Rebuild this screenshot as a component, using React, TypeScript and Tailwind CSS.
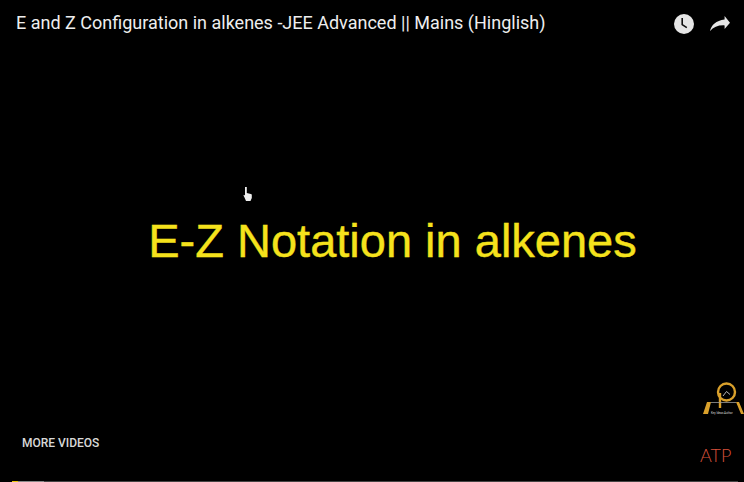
function ShareIcon() {
  return (
    <svg viewBox="0 0 20 15" className="w-5 h-[15px]" fill="#e6e6e6">
      <path d="M14.6 0 20 6.8 14.6 13V9.4C8.8 9 3.4 11 0 15 1.2 9 6 4.4 14.6 3.4Z" />
    </svg>
  );
}

function WatchLaterIcon() {
  return (
    <svg viewBox="0 0 20 20" className="w-5 h-5">
      <circle cx="10" cy="10" r="10" fill="#e6e6e6" />
      <path d="M8.2 4v6.6l4.6 3" fill="none" stroke="#111" strokeWidth="1.6" />
    </svg>
  );
}

function ChannelLogo() {
  return (
    <svg viewBox="0 0 46 46" className="w-[46px] h-[46px]">
      <circle cx="28.5" cy="17" r="8.5" fill="none" stroke="#d9a02b" strokeWidth="2.4" />
      <path d="M22 18v15" stroke="#d9a02b" strokeWidth="2.4" />
      <path d="M25 21l3.5-4.500 3.500 3" fill="none" stroke="#c8c8c8" strokeWidth="0.9" />
      <path d="M9 27h4l-3 12H5zM38 27h3l5 12h-3z" fill="#d9a02b" />
      <path d="M13 27.500h25" stroke="#999" strokeWidth="0.8" />
      <text x="13" y="39" fontSize="2.900" fill="#ddd" fontFamily="Roboto, sans-serif">Key Ideas Author</text>
    </svg>
  );
}

export default function App() {
  return (
    <div className="relative w-[744px] h-[482px] overflow-hidden bg-black font-['Roboto',sans-serif]">
      <div className="flex items-start justify-between pl-4 pr-[14px] pt-[5px]">
        <h1 className="text-[#eeeeee] text-[18px] leading-9 whitespace-nowrap font-normal">
          E and Z Configuration in alkenes -JEE Advanced || Mains (Hinglish)
        </h1>
        <div className="flex items-center gap-4 pt-[9px]">
          <WatchLaterIcon />
          <div className="-mt-[2px]">
            <ShareIcon />
          </div>
        </div>
      </div>

      <div className="flex justify-center pt-[172px] pl-[41px]">
        <p className="text-[#f5e21c] text-[47px] leading-[56px] whitespace-nowrap font-['Liberation_Sans',sans-serif] [-webkit-text-stroke:0.4px_#f5e21c]">
          E-Z Notation in alkenes
        </p>
      </div>

      {/* cursor caught in the capture */}
      <div className="absolute left-[243px] top-[186px]">
        <svg viewBox="0 0 10 15" className="w-[10px] h-[15px]" fill="#eee">
          <path d="M2 1h1.800v6l1 .2 1 .3 1 .2 1 .3 1 .5V12L7.500 15H3L1.500 11.500 .5 9.500l.5-.8 1 .8z" />
        </svg>
      </div>

      <div className="absolute left-[22px] top-[435px] text-[#d8d8d8] text-[12px] leading-4 font-medium">
        MORE VIDEOS
      </div>

      <div className="absolute left-[698px] top-[375px]">
        <ChannelLogo />
      </div>
      <div className="absolute left-[700px] top-[443px] text-[#d8503a] text-[18px] leading-6 font-light font-['Lato',sans-serif]">
        ATP
      </div>

      <div className="absolute left-3 right-[6px] bottom-0 h-[1px] flex bg-[#444]">
        <div className="w-[6px] bg-[#e8c40c]" />
        <div className="w-[26px] bg-[#888]" />
      </div>
    </div>
  );
}
